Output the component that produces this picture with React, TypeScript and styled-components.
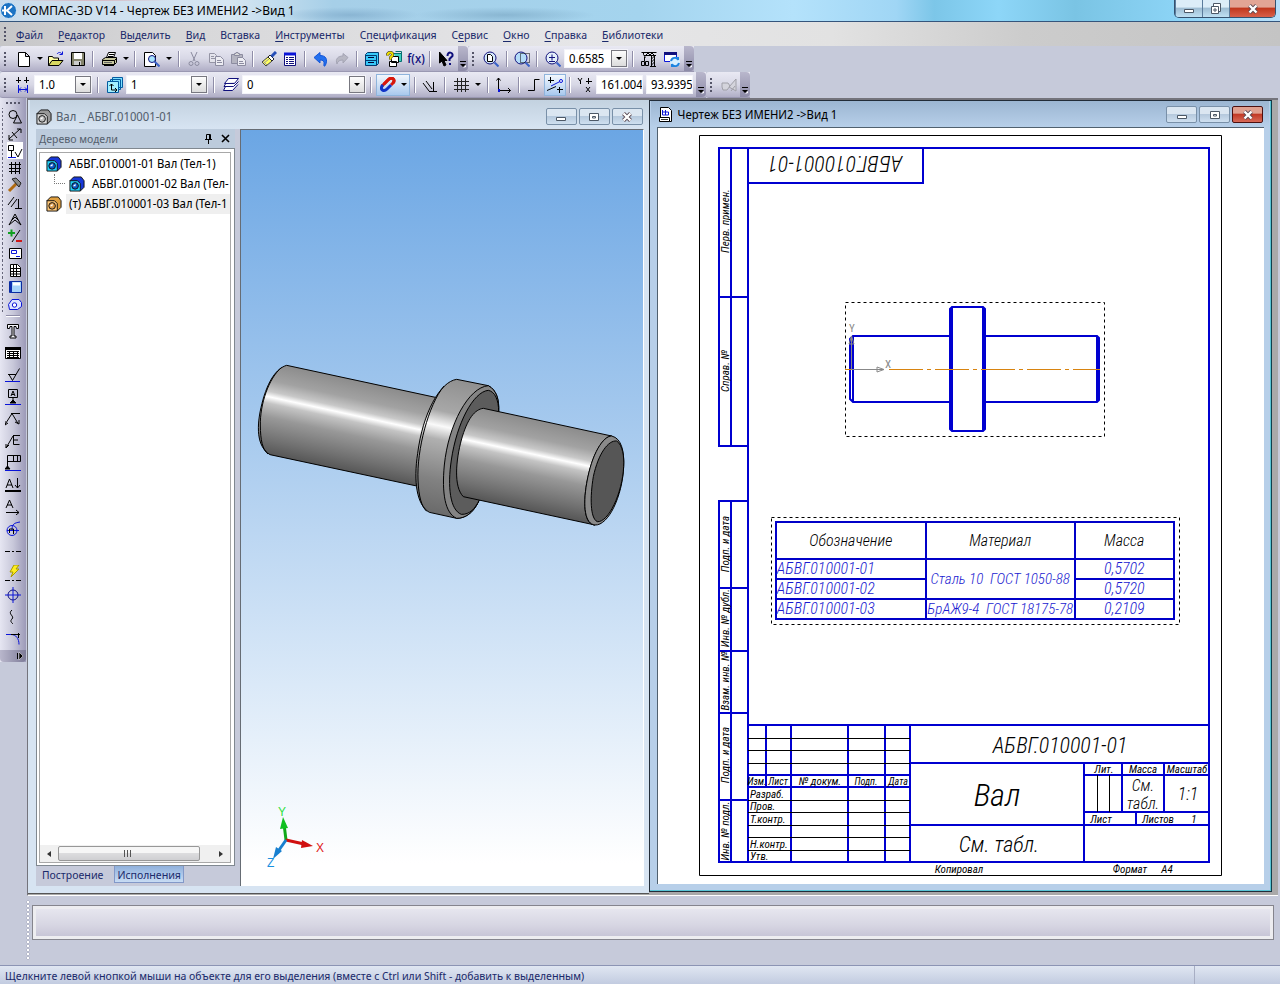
import React from "react";
import styled, { createGlobalStyle, css } from "styled-components";

const GlobalStyle = createGlobalStyle`
  * { box-sizing: border-box; }
  body {
    margin: 0;
    background: #c6cada;
    font-family: "Noto Sans Display", "Noto Sans", "DejaVu Sans Condensed", sans-serif;
    font-size: 11px;
    color: #1b2a6b;
  }
  button, input, select { font: inherit; color: inherit; margin: 0; }
`;

/* ---------- icons ---------- */

type PathProps = { d: string; c?: string; f?: string; w?: number };
const P = ({ d, c = "#000", f = "none", w = 1 }: PathProps) => (
  <path d={d} stroke={c} fill={f} strokeWidth={w} />
);

const blue = "#0a14d8";
const navy = "#10107c";

const icons: Record<string, React.ReactNode> = {
  new: <P d="M2.5 1.5h7l4 4v10h-11zM9.5 1.5v4h4" f="#fff" />,
  open: (
    <>
      <P d="M.5 14.5v-9h4l1 1.5h5v2.5" f="#ffffa8" />
      <P d="M.5 14.5l3.500-5h11l-4 5z" f="#d8d860" />
      <P d="M9 3c1.500-2 3.500-2 5 0M14.500.500v3h-3" c={blue} />
    </>
  ),
  save: (
    <>
      <P d="M1.5 1.5h13v13h-13z" f="#84846c" />
      <P d="M4 2h8v6h-8z" c="none" f="#fff" />
      <P d="M4 10h7v4h-7z" c="none" f="#ccc" />
      <P d="M9.500 11v3" />
    </>
  ),
  print: (
    <>
      <P d="M4.5 6.500l2-5h7l-2 5z" f="#fff" />
      <P d="M7 3.500h5M6 5.500h5" />
      <P d="M.5 8.500l3-2h11v5l-2 2h-12z" f="#c8c8a0" />
      <P d="M1 9.500h11.500l2-2M12.500 9.500v4M2 14.500h10" />
      <P d="M2 11.500h8" c="#666" />
    </>
  ),
  preview: (
    <>
      <P d="M.5 1.500h8l3 3v11h-11z" f="#fff" />
      <circle cx="8" cy="8" r="3.500" fill="#a8e4ff" stroke={navy} />
      <P d="M10.500 10.500l5 5" c="#3a62c8" w={2} />
    </>
  ),
  cut: (
    <>
      <P d="M5 1l4 9M11 1l-4 9" c="#8c8ca0" />
      <circle cx="5" cy="12.500" r="2" fill="none" stroke="#8c8ca0" />
      <circle cx="11" cy="12.500" r="2" fill="none" stroke="#8c8ca0" />
    </>
  ),
  copy: (
    <>
      <P d="M1.500 2.500h5l2 2v7h-7zM3 5.500h3M3 7.500h4" c="#9494a4" f="#e4e4ec" />
      <P d="M7.500 5.500h5l3 3v6h-8zM9 9.500h4M9 11.500h5" c="#8c8ca0" f="#ececf2" />
    </>
  ),
  paste: (
    <>
      <P d="M1.500 3.500h11v9h-11z" c="#8c8ca0" f="#b4b4c0" />
      <P d="M4.500 4.500v-2h1.500v-1h2v1h1.500v2z" c="#8c8ca0" f="#ddd" />
      <P d="M7.500 6.500h5l3 3v5h-8zM9 10.500h4M9 12.500h5" c="#8c8ca0" f="#ececf2" />
    </>
  ),
  brush: (
    <>
      <P d="M1 11l6-5 4 4-6 5z" c="#444" f="#ffff60" />
      <P d="M3 12l5-4M2 10l4 4" c="#999" />
      <P d="M7 6l2-2 4 4-2 2z" c="#222" f="#fff" />
      <P d="M10.500 5.500l4.500-4.500" c="#2850b8" w={3} />
    </>
  ),
  props: (
    <>
      <P d="M2.500 2.500h11v12h-11z" c={navy} f="#fff" />
      <P d="M2 3h12" c={blue} w={3} />
      <P d="M4 6.500h2M7 6.500h5M4 8.500h2M7 8.500h5M4 10.500h2M7 10.500h5M4 12.500h2M7 12.500h5" c={navy} />
    </>
  ),
  undo: <P d="M1 6.500l6-5v3c6 0 8 4 5.500 9.500-1 2-2 1.500-1.500-1 .500-3-1-4-4-4v3z" c="#1456d8" f="#2470ee" />,
  redo: <P d="M14 6.500l-5-4v2.500c-5 0-8 3-6 8 .500-3 3-4 6-4v3z" c="#a4a4b4" f="#b8b8c4" />,
  cabinet: (
    <>
      <P d="M1.500 3.500l2-2h11v11l-2 2h-11z" f="#38c8f8" c="#023a70" />
      <P d="M1.500 4.500h11v10M1.500 9.500h11" c="#023a70" />
      <P d="M4 6.500h6M4 11.500h6" c="#003" />
    </>
  ),
  vars: (
    <>
      <P d="M7.500 2.500h8v8h-3" c="#067070" f="#40d0c0" />
      <P d="M9.500.500h6v8" c="#067070" />
      <P d="M5.500 5.500h7v6h-7zM3.500 10.500h7v5h-7z" f="#fff" />
      <P d="M1.500 4.500c0-4 6-4 5 0l-2 2v2" c="#222" w={3} />
      <P d="M1.500 4.500c0-4 6-4 5 0l-2 2v2" c="#f0e000" w={2} />
    </>
  ),
  help: (
    <>
      <P d="M1.500 1v11l2.500-2 2 5 2-1-2-4.500h3z" f="#000" />
      <P d="M9.500 5c0-5 6-4 5 0l-3 3v2M11 13h2" c={navy} w={2} />
    </>
  ),
  zoomPage: (
    <>
      <circle cx="7" cy="7" r="6" fill="#d4e8fa" stroke={navy} />
      <P d="M4.500 3.500h3l2 2v5h-5z" f="#fff" />
      <P d="M11.500 11.500l4 4" c="#3a62c8" w={2} />
    </>
  ),
  zoomArea: (
    <>
      <circle cx="7" cy="7" r="6" fill="#b4dcf8" stroke={navy} />
      <path d="M6.500 2.500h9v9h-9z" fill="none" stroke="#000" strokeDasharray="1 1" />
      <P d="M11.500 11.500l4 4" c="#3a62c8" w={2} />
    </>
  ),
  zoomIn: (
    <>
      <circle cx="7" cy="7" r="6" fill="#e4f0fa" stroke={navy} />
      <P d="M4 6.500h6M7 3.500v6M4 10.500h6" c={navy} />
      <P d="M11.500 11.500l4 4" c="#3a62c8" w={2} />
    </>
  ),
  crane: (
    <>
      <P d="M.500 1.500h15M3 4.500h12M2.500 1.500v2l2 3M5 4l2-2 2 2 2-2 2 2M10.500 5v10M13.500 5v10M10.500 8l3-3M10.500 11l3-3M10.500 14l3-3M9 15.500h6" />
      <P d="M3.500 6v4M.500 10.500h3v4h-3zM4.500 10.500h3v4h-3z" />
    </>
  ),
  refresh: (
    <>
      <P d="M.500 1.500h12v9h-12z" c={blue} f="#fff" />
      <P d="M0 2.500h13" c={navy} w={3} />
      <circle cx="11" cy="11" r="5" fill="#d8f0ff" stroke="none" />
      <P d="M7 10c1-4 6-4 7-1v-3M15 12c-1 4-6 4-7 1v3" c="#1c84e0" w={2} />
    </>
  ),
  step: (
    <>
      <P d="M3.500 0v6M1 3.500h5M11.500 0v6M9 3.500h5" />
      <P d="M3.500 8v8M12.500 8v8M4 12.500h8M6 10.500l-2 2 2 2M10 10.500l2 2-2 2" c={blue} />
    </>
  ),
  views: (
    <>
      <P d="M5.500.500h10v10h-10zM3.500 2.500h10v10h-10z" c="#045ca0" f="#7ce0ff" />
      <P d="M.500 4.500h11v11h-11z" c="#045ca0" f="#a4f0ff" />
      <P d="M4.500 7v6h5M2.500 9l2-2 2 2M8 11l2 2-2 2" />
    </>
  ),
  layers: <P d="M5.500 1.500h10l-4 5h-10zM3 6l-2 3.500h9.500l5-5M2.500 9.500l-2 4h9l5.500-6" c={navy} f="#fff" />,
  magnet: (
    <>
      <P d="M2 9l6-6c4-4 8 0 5 3l-2 2" c="#d8180c" w={3} />
      <P d="M3 8l-1 1c-2 4 2 6 5 3l4-4" c="#1034c8" w={3} />
      <P d="M4 7l4-4c4-4 8 0 5 3" c="#d8180c" w={3} />
    </>
  ),
  perp: <P d="M1 6l6 8M4 4l6 8M11.500 5v9M7 14.500h8" />,
  grid: <P d="M4.500 1v14M8.500 1v14M12.500 1v14M1 4.500h15M1 8.500h15M1 12.500h15" c="#222" />,
  axes: (
    <>
      <P d="M3.500 1v12.500h12M1.500 3.500l2-2.500 2 2.500M13 11l2.500 2.500-2.500 2.500" />
      <P d="M3 13.500h2" c={blue} w={3} />
    </>
  ),
  ortho: <P d="M2 13.500h6.500v-11h5" />,
  snap: (
    <>
      <P d="M3.500 0v6M1 3.500h6M12.500 10v6M10 12.500h6M0 13.500l9-4" />
      <P d="M4 9l10-5" c={blue} />
      <circle cx="14" cy="4" r="1.500" fill="#fff" stroke={blue} />
    </>
  ),
  xy: <P d="M1 1l2 3 2-3M3.500 4v3M11.500 1v6M9 4.500h6M9 10l4 5M13 10l-4 5" />,
  cad: <P d="M1 6h6l2 3-3 4h-4l-1-3zM8 10l7-8v12zM10 14l4-5" c="#a0a0a8" f="#d4d4dc" />,
  shapes: (
    <>
      <circle cx="6" cy="5.500" r="4" fill="none" stroke="#000" />
      <P d="M10.500 6l4 8h-8z" />
    </>
  ),
  dims: <P d="M2 13l11-10M2 9v5h4M10 3h4v4M5 6l5 6" />,
  symb: (
    <>
      <P d="M1.500 2.500h5v5h-5zM4.500 8v6M8 9l3 5 4-8" />
      <P d="M1 14.500h8" c={blue} />
    </>
  ),
  hatch: <P d="M4.500 2v12M8.500 2v12M12.500 2v12M2 4.500h12M2 8.500h12M2 11.500h10" />,
  hammer: (
    <>
      <P d="M2 14l8-8" c="#b06a10" w={3} />
      <P d="M5 2l4-1 5 5-2 4z" c="#222" f="#888" />
    </>
  ),
  par: <P d="M1 11l6-8M4 13l6-8M11.500 5v9M8 14.500h7" />,
  compass: <P d="M2 14l6-11 6 11M5 9l3-3 3 3M2 14l6-5 6 5" />,
  plusminus: (
    <>
      <P d="M1 5h7M4.500 1.500v7" c="#10a020" w={2} />
      <P d="M5 14l8-12" />
      <P d="M9 13h6" c="#d01818" w={2} />
    </>
  ),
  spec: (
    <>
      <P d="M2.500 3.500h12v10h-12z" f="#fff" />
      <P d="M4.500 5.500h5v3h-5zM9 11.500h4" c={blue} />
    </>
  ),
  sheet: (
    <>
      <P d="M3.500 2.500h7l3 3v9h-10z" f="#fff" />
      <P d="M6.500 3v11M9.500 3v11M4 6.500h9M4 9.500h9M4 12h9" />
    </>
  ),
  book: (
    <>
      <P d="M2.500 2.500h12v11h-12z" c="#0a2ca0" f="#a8d4fa" />
      <P d="M4 2v12" c="#1030b0" w={2} />
      <P d="M6 5h7" c="#fff" w={3} />
    </>
  ),
  part: (
    <>
      <P d="M5 3.500h7l2.500 3v4l-4 3h-8l-1-5z" c={blue} f="#dce4ff" />
      <circle cx="7.500" cy="9" r="2.200" fill="#fff" stroke={blue} />
    </>
  ),
  text: <P d="M2.500 1.500h11v4h-2l-.500-2h-2v9.500h2v2h-6v-2h2v-9.500h-2l-.500 2h-2z" f="#f2f2f8" />,
  table: (
    <>
      <P d="M.5 2.500h15v11h-15z" f="#fff" />
      <P d="M0 3.500h16" w={3} />
      <P d="M2 6.500h12M2 8.500h12M2 10.500h12M2 12.500h12M4.500 6v7M8.500 6v7M12.500 6v7" />
    </>
  ),
  rough: (
    <>
      <P d="M3 7.500h8M4 7.500l3.500 6 7-12" />
      <P d="M0 14.500h15" c={blue} />
    </>
  ),
  base: (
    <>
      <P d="M3.500.500h9v8h-9zM6 7l2-5 2 5M7 5.500h2M8 9v4" />
      <P d="M5 14l3-3 3 3z" f="#000" />
      <P d="M0 15.500h16" c={blue} />
    </>
  ),
  leader: <P d="M6 2.500h9M7 2.500l-7 11M7 2.500l6 10M0 10v4l3-2M10 11l4 2v-4" />,
  leaderE: <P d="M8 2.500h7M8.500 2.500v9h6M8 7h5M8 3l-7 12M1 11v4l3-3" />,
  flag: (
    <>
      <P d="M2.500 14v-13.500h13v6h-13M8.500.500v6M12.500.500v6" />
      <P d="M0 14l2.500-3 2.500 3z" f="#000" />
      <P d="M0 15.500h16" c={blue} />
    </>
  ),
  adown: (
    <>
      <P d="M1 11l3.500-9 3.500 9M2 8h5M12.500 1v10M10 8l2.500 3 2.500-3" />
      <P d="M0 14h16" w={2} />
    </>
  ),
  aright: <P d="M1 9l3.500-8 3.500 8M2 6h5M1 13.500h13M11 11l3 2.500-3 2.500" />,
  view: (
    <>
      <circle cx="7" cy="9.500" r="5" fill="none" stroke={blue} />
      <P d="M2 9.500h12M7 9c0-6 2-7 8-8" c={blue} />
      <P d="M4.500 12v-4h4v5" />
    </>
  ),
  dashes: <P d="M0 8.500h5M7 8.500h2M11 8.500h5" />,
  bolt: (
    <>
      <P d="M9 0h5l-3 4h3l-8 8 2-5h-3z" c="#a89a00" f="#ffee20" />
      <P d="M0 15.500h5M7 15.500h2M11 15.500h5" />
    </>
  ),
  target: (
    <>
      <circle cx="8" cy="8" r="5" fill="none" stroke={navy} />
      <P d="M8 0v16M0 8h16" c={blue} />
    </>
  ),
  wave: <P d="M7 1c-5 4 3 6 0 9-2 2-1 3 1 5" />,
  corner: (
    <>
      <P d="M1 3.500h5c5 0 8 4 8 10" c={blue} />
      <P d="M6 3.500h9M13.500 2v5" />
    </>
  ),
};

const Svg = styled.svg`
  display: block;
  flex: none;
`;
const Icon = ({ name }: { name: string }) => (
  <Svg width="16" height="16" viewBox="0 0 16 16" aria-hidden="true">
    {icons[name]}
  </Svg>
);

const Hexnut = ({ face, side, hole }: { face: string; side: string; hole: string }) => (
  <Svg width="16" height="16" viewBox="0 0 17 17" aria-hidden="true">
    <path d="M1 5l4-4h8l3 4v7l-4 4z" fill={side} stroke="#111" />
    <path d="M1 5h8l3 3v8h-11z" fill={face} stroke="#111" />
    <circle cx="6.500" cy="10.500" r="3.500" fill={hole} stroke="#111" />
    <path d="M4 11l3-3v3z" fill="#fff" />
  </Svg>
);

/* ---------- application shell ---------- */

const Page = styled.div`
  min-height: 100vh;
  display: flex;
  flex-direction: column;
`;

const TitleBar = styled.header`
  height: 22px;
  display: flex;
  align-items: center;
  gap: 5px;
  border-bottom: 1px solid #35557c;
  background:
    radial-gradient(ellipse at 7% 0, #d9a9b0 0, transparent 5%),
    radial-gradient(70px 8px at 350px 15px, rgba(110, 155, 190, 0.5) 0, transparent 100%),
    radial-gradient(90px 8px at 505px 15px, rgba(110, 155, 185, 0.5) 0, transparent 100%),
    linear-gradient(90deg, #c9dcec 0, #d6e6f2 18%, #a6cfe8 26%, #a4d4ee 50%, #b4e2fb 62%, #a0d6f5 70%, #7cc6e8 73%, #8dd6f8 78%, #7ac4e4 84%, #8cd4f6 92%, #b8e0fa 100%);
  color: #000;
  flex: none;
`;

const AppTitle = styled.h1`
  margin: 0;
  flex: 1;
  font-family: "Noto Sans", sans-serif;
  font-size: 12px;
  font-weight: 400;
`;

const SystemButtons = styled.div`
  display: flex;
  align-self: flex-start;
  height: 18px;
  margin-right: 4px;
  border: 1px solid #35516e;
  border-top: 0;
  border-radius: 0 0 5px 5px;
  overflow: hidden;
`;

const SystemButton = styled.button<{ $close?: boolean }>`
  width: ${(p) => (p.$close ? 46 : 27)}px;
  padding: 0;
  display: flex;
  align-items: center;
  justify-content: center;
  border: 0;
  border-left: 1px solid #5b7c9c;
  background: ${(p) =>
    p.$close
      ? "linear-gradient(#e2a595 0 40%, #c1391f 50%, #d8604a)"
      : "linear-gradient(#dcedf8 0 40%, #9fbed4 50%, #bfe0f2)"};
`;

const MenuBar = styled.nav`
  height: 24px;
  display: flex;
  align-items: center;
  gap: 15px;
  flex: none;
  background: linear-gradient(90deg, #c6c6c8 0, #d6d6d8 12%, #e6e6e8 45%, #e2e2e2 65%, #cccccc 80%, #c4c4c4 100%);
`;

const MenuLink = styled.a`
  color: #1b2a6b;
  text-decoration: none;
  u { text-underline-offset: 2px; }
`;

const ToolRow = styled.div`
  display: flex;
  height: 26px;
  flex: none;
`;

const ToolBar = styled.div`
  display: flex;
  align-items: center;
  height: 26px;
  flex: none;
  background: linear-gradient(#e9e9f3, #d8d8e6 50%, #b0aec6);
  border-bottom: 1px solid #9a98b2;
  border-radius: 3px 0 0 3px;
`;

const Grip = styled.span`
  width: 12px;
  height: 16px;
  flex: none;
  background: radial-gradient(circle, #555568 1px, transparent 1px) 3px 0 / 4px 4px repeat-y;
`;

const MenuGrip = styled(Grip)`
  width: 16px;
  margin-right: -15px;
`;

const ToolButton = styled.button<{ $w?: number; $on?: boolean }>`
  width: ${(p) => p.$w ?? 20}px;
  height: 22px;
  padding: 0;
  display: flex;
  align-items: center;
  justify-content: center;
  flex: none;
  gap: 5px;
  border: 1px solid transparent;
  background: none;
  color: ${navy};
  ${(p) => p.$on && css`
    border-color: #8fb4dc;
    background: linear-gradient(#f2f7fd, #a9c9ee);
  `}
`;

const Formula = styled.span`
  font-size: 12px;
  font-weight: 500;
  line-height: 16px;
`;

const Arrow = styled.span`
  width: 0;
  height: 0;
  border: 3px solid transparent;
  border-top: 3px solid #000;
  border-bottom: 0;
`;

const Divider = styled.span<{ $w?: number }>`
  width: ${(p) => p.$w ?? 10}px;
  height: 16px;
  flex: none;
  background: linear-gradient(90deg, #8f8da8 0 1px, #fff 1px 2px) center / 2px 100% no-repeat;
`;

const BarEnd = styled.button`
  width: 10px;
  height: 25px;
  margin-left: auto;
  padding: 0 0 2px;
  display: flex;
  align-items: flex-end;
  justify-content: center;
  border: 0;
  border-radius: 0 4px 4px 0;
  background: linear-gradient(#b9b7cc, #8d8ba8);
  flex: none;
`;

const Overflow = () => (
  <Svg width="8" height="9" viewBox="0 0 8 9" aria-hidden="true">
    <path d="M1 1.500h6" stroke="#000" />
    <path d="M1 4h6l-3 3z" fill="#000" />
    <path d="M4 8l3-3v2z" fill="#fff" />
  </Svg>
);

const Combo = styled.label<{ $w: number }>`
  width: ${(p) => p.$w}px;
  height: 19px;
  display: flex;
  flex: none;
  background: #fff;
  color: #000;
  border: 1px solid #f4f4fa;
`;

const ComboSelect = styled.select`
  flex: 1;
  min-width: 0;
  appearance: none;
  border: 0;
  padding: 0 0 0 4px;
  background: #fff;
  font-size: 12px;
  line-height: 16px;
`;

const ComboArrow = styled.span`
  width: 16px;
  display: flex;
  align-items: center;
  justify-content: center;
  border: 1px solid #77777f;
  background: linear-gradient(#fdfdfd, #dcdcdc);
`;

const CoordInput = styled.input`
  width: 47px;
  height: 19px;
  margin-right: 3px;
  padding: 0 0 0 4px;
  border: 1px solid #f4f4fa;
  background: #fff;
  color: #000;
  font-size: 12px;
`;

const Select = ({ label, value, w }: { label: string; value: string; w: number }) => (
  <Combo $w={w}>
    <ComboSelect aria-label={label} defaultValue={value}>
      <option>{value}</option>
    </ComboSelect>
    <ComboArrow>
      <Arrow />
    </ComboArrow>
  </Combo>
);

const Btn = ({ icon, label, w, on }: { icon: string; label: string; w?: number; on?: boolean }) => (
  <ToolButton type="button" aria-label={label} $w={w} $on={on}>
    <Icon name={icon} />
  </ToolButton>
);

const Drop = ({ label, w = 8 }: { label: string; w?: number }) => (
  <ToolButton type="button" aria-label={label} $w={w}>
    <Arrow />
  </ToolButton>
);

const menu: [string, string, string][] = [
  ["", "Ф", "айл"],
  ["", "Р", "едактор"],
  ["В", "ы", "делить"],
  ["", "В", "ид"],
  ["Вст", "а", "вка"],
  ["", "И", "нструменты"],
  ["С", "п", "ецификация"],
  ["С", "е", "рвис"],
  ["", "О", "кно"],
  ["", "С", "правка"],
  ["", "Б", "иблиотеки"],
];

/* ---------- workspace ---------- */

const Workspace = styled.div`
  display: flex;
  flex: 1;
  min-height: 0;
`;

const SideColumn = styled.aside`
  width: 27px;
  flex: none;
`;

const SideBar = styled.div`
  width: 26px;
  display: flex;
  flex-direction: column;
  align-items: center;
  background: linear-gradient(90deg, #e6e6f2, #c8c8da 50%, #9c9ab8);
`;

const SideGrip = styled.span`
  width: 16px;
  height: 10px;
  background: radial-gradient(circle, #555568 1px, transparent 1px) 0 3px / 4px 4px repeat-x;
`;

const PanelButton = styled.button<{ $on?: boolean }>`
  width: 26px;
  height: 17px;
  padding: 0 0 0 7px;
  display: flex;
  align-items: center;
  border: 0;
  background:
    radial-gradient(circle, #66667a 1px, transparent 1px) 1px 2px / 3px 4px repeat-y
    ${(p) => p.$on && ", linear-gradient(#fff, #fff) 7px 0 / 16px 17px no-repeat"};
`;

const SideButton = styled.button`
  width: 26px;
  height: 22px;
  padding: 0 0 0 5px;
  display: flex;
  align-items: center;
  border: 0;
  background: none;
`;

const SideRule = styled.span`
  width: 14px;
  height: 8px;
  background: linear-gradient(#8f8da8 0 1px, #fff 1px 2px) center / 100% 2px no-repeat;
`;

const SideEnd = styled.button`
  width: 26px;
  height: 12px;
  padding: 0 2px;
  display: flex;
  align-items: center;
  justify-content: flex-end;
  border: 0;
  border-radius: 0 0 4px 4px;
  background: linear-gradient(90deg, #b9b7cc, #7d7b98);
`;

const Mdi = styled.main`
  flex: 1;
  display: flex;
  align-items: stretch;
  min-width: 0;
  padding: 0 6px 1px 0;
  margin-right: 2px;
  background: #a9a9a9;
  border-top: 2px solid #74747c;
  border-left: 1px solid #74747c;
  border-bottom: 1px solid #fff;
`;

const ModelWindow = styled.section`
  flex: 1 1 0;
  min-width: 0;
  display: flex;
  flex-direction: column;
  padding: 0 5px 7px 8px;
  background: #d7e4f2;
  border-bottom: 1px solid #555;
`;

const DrawingWindow = styled.section`
  flex: 1 1 0;
  min-width: 0;
  display: flex;
  flex-direction: column;
  padding: 0 7px 7px 7px;
  background: #b7cfe9;
  border: 1px solid #222c38;
  border-right-color: #10404c;
  box-shadow: inset -1px -1px 0 #58c4d4;
  margin-bottom: 2px;
`;

const WindowHead = styled.div<{ $active?: boolean }>`
  height: ${(p) => (p.$active ? 26 : 29)}px;
  flex: none;
  display: flex;
  align-items: center;
  gap: 4px;
  padding: 4px 6px 0;
  margin: 0 -5px 0 -6px;
  padding-top: ${(p) => (p.$active ? 1 : 4)}px;
  color: ${(p) => (p.$active ? "#000" : "#54606e")};
  background: ${(p) =>
    p.$active ? "linear-gradient(#9cb6d2, #b7cfe9)" : "linear-gradient(#c3d2e0, #d7e4f2)"};
`;

const WindowTitle = styled.h2`
  flex: 1;
  margin: 0;
  font-size: 12px;
  font-weight: 400;
`;

const ChildButton = styled.button<{ $close?: boolean }>`
  width: 31px;
  height: 17px;
  padding: 0;
  display: flex;
  align-items: center;
  justify-content: center;
  border: 1px solid #7990a8;
  border-radius: 2px;
  background: linear-gradient(#dbe6f1 0 45%, #b6c9dd 50%, #cfe0f0);
  ${(p) => p.$close && css`
    border-color: #4c1010;
    background: linear-gradient(#e0a090 0 40%, #c23a26 50%, #d86a58);
  `}
`;

const ChildButtons = styled.div`
  display: flex;
  gap: 2px;
`;

const Glyph = ({ kind }: { kind: "min" | "max" | "restore" | "close" }) => (
  <Svg width="14" height="12" viewBox="0 0 14 12" aria-hidden="true">
    {kind === "min" && <path d="M2.500 6.500h9v3h-9z" fill="#fff" stroke="#4c5866" />}
    {kind === "max" && <path d="M2.500 2.500h9v7h-9zM5.500 5.500h3v1.500h-3z" fill="#fff" stroke="#4c5866" />}
    {kind === "restore" && (
      <>
        <path d="M4.500.500h7v8h-7z" fill="#fff" stroke="#4c5866" />
        <path d="M2.500 3.500h7v7h-7zM5 6h2v2h-2z" fill="#fff" stroke="#4c5866" />
      </>
    )}
    {kind === "close" && (
      <>
        <path d="M3.500 2.500l7 7M10.500 2.500l-7 7" stroke="#5a4a54" strokeWidth="4" />
        <path d="M3.500 2.500l7 7M10.500 2.500l-7 7" stroke="#fff" strokeWidth="2.400" />
      </>
    )}
  </Svg>
);

const ModelBody = styled.div`
  flex: 1;
  display: flex;
  min-height: 0;
`;

const TreePanel = styled.div`
  width: 204px;
  flex: none;
  display: flex;
  flex-direction: column;
  background: #c6cada;
  padding-right: 5px;
`;

const TreeHead = styled.div`
  height: 19px;
  display: flex;
  align-items: center;
  gap: 8px;
  padding: 0 5px 0 3px;
  background: #bccbdc;
  color: #55606e;
`;

const TreeTitle = styled.h3`
  flex: 1;
  margin: 0;
  font-size: 11px;
  font-weight: 400;
`;

const PlainButton = styled.button`
  padding: 0;
  border: 0;
  background: none;
`;

const TreeFrame = styled.div`
  flex: 1;
  display: flex;
  padding: 3px 3px 2px 2px;
  background: #fff;
  border: 1px solid #808890;
`;

const TreeBox = styled.div`
  flex: 1;
  min-width: 0;
  display: flex;
  flex-direction: column;
  border: 1px solid #a8a8a8;
`;

const TreeList = styled.ul`
  flex: 1;
  margin: 0;
  padding: 1px 0;
  list-style: none;
  overflow: hidden;
  color: #000;
  font-size: 12px;
`;

const TreeItem = styled.li<{ $nested?: boolean }>`
  height: 20px;
  display: flex;
  align-items: center;
  gap: 4px;
  padding-left: ${(p) => (p.$nested ? 14 : 6)}px;
  white-space: nowrap;
`;

const Branch = styled.span`
  width: 11px;
  height: 10px;
  margin: -10px 0 0;
  border-left: 1px dotted #777;
  border-bottom: 1px dotted #777;
`;

const TreeLabel = styled.span<{ $sel?: boolean }>`
  flex: 1;
  line-height: 20px;
  padding-left: 3px;
  overflow: hidden;
  background: ${(p) => (p.$sel ? "#efefef" : "none")};
`;

const ScrollBar = styled.div`
  height: 17px;
  display: flex;
  align-items: center;
  background: #f0f0f0;
`;

const ScrollArrow = styled.button<{ $dir: "left" | "right" }>`
  width: 18px;
  height: 17px;
  padding: 0;
  display: flex;
  align-items: center;
  justify-content: center;
  border: 0;
  background: none;
  &::before {
    content: "";
    border: 3px solid transparent;
    ${(p) => (p.$dir === "left" ? "border-right: 4px solid #333; border-left: 0;" : "border-left: 4px solid #333; border-right: 0;")}
  }
`;

const ScrollTrack = styled.div`
  flex: 1;
  display: flex;
`;

const ScrollThumb = styled.div`
  flex: 0 0 92%;
  height: 15px;
  border: 1px solid #979797;
  border-radius: 2px;
  background:
    repeating-linear-gradient(90deg, #555 0 1px, transparent 1px 3px) center / 9px 7px no-repeat,
    linear-gradient(#f6f6f6 0 45%, #dcdcde 50%, #cfcfd2);
`;

const Tabs = styled.div`
  height: 20px;
  display: flex;
  align-items: flex-start;
  gap: 8px;
  padding-left: 3px;
`;

const Tab = styled.button<{ $on?: boolean }>`
  height: 17px;
  padding: 2px 2px 0;
  line-height: 14px;
  border: ${(p) => (p.$on ? "1px solid #8298c8" : "1px solid transparent")};
  border-top: 0;
  background: ${(p) => (p.$on ? "linear-gradient(#8fb0dc, #c8dcf4)" : "none")};
`;

const Viewport = styled.div`
  flex: 1;
  min-width: 0;
  position: relative;
  overflow: hidden;
  border-left: 1px solid #666c74;
  border-top: 1px solid #666c74;
  border-right: 1px solid #fff;
  background: linear-gradient(#6ba6e4, #a7caee 40%, #fff 97%);
`;

const ShaftCanvas = styled.svg`
  position: absolute;
  left: -1px;
  top: 220px;
`;

const Triad = styled.svg`
  position: absolute;
  left: 24px;
  bottom: 18px;
  font-family: "Liberation Sans", sans-serif;
  font-size: 12px;
`;

const DrawingBody = styled.div`
  flex: 1;
  display: flex;
  justify-content: center;
  align-items: flex-start;
  padding-top: 7px;
  background: #fff;
  border: 1px solid #50606e;
  border-width: 1px 0 0 1px;
  overflow: hidden;
`;

const Sheet = styled.div`
  position: relative;
  width: 524px;
  height: 742px;
  flex: none;
  font-family: "Roboto Condensed", Roboto, "Liberation Sans", sans-serif;
  font-style: italic;
  font-weight: 300;
  color: #000;
`;

const VariantTable = styled.table`
  position: absolute;
  left: 76px;
  top: 386px;
  width: 400px;
  border-collapse: collapse;
  table-layout: fixed;
  border: 2px solid #0000c8;
  font-size: 16px;
  line-height: 18px;
  color: #1a1ad0;
  th, td {
    height: 20px;
    padding: 0;
    border: 2px solid #0000c8;
    font-weight: 300;
    text-align: center;
    white-space: nowrap;
  }
  th { height: 37px; color: #000; }
  tr td:first-child { text-align: left; }
`;

const MaterialCell = styled.td`
  font-size: 15px;
`;

const ink = "#0000d0";

type LabelProps = { x: number; y: number; size?: number; anchor?: "start" | "middle"; turn?: number; children: React.ReactNode };
const Label = ({ x, y, size = 11, anchor = "middle", turn, children }: LabelProps) => (
  <text
    x={x}
    y={y}
    fontSize={size}
    fontWeight={size < 16 ? 400 : 300}
    textAnchor={anchor}
    transform={turn ? `rotate(${turn} ${x} ${y})` : undefined}
  >
    {children}
  </text>
);

const DrawingSheet = () => (
  <Sheet>
    <Svg width="524" height="742" viewBox="0 0 524 742" role="img" aria-label="Чертеж вала">
      <path d="M.500.500h522v740h-522z" fill="none" stroke="#000" />
      <g fill="none" stroke={ink} strokeWidth="2">
        <path d="M49 13h461v714h-461zM49 48h175v-35" />
        <path d="M49 13h-29v298h29M32 13v298M20 162h29" />
        <path d="M49 366h-29v361h29M32 366v361M20 453h29M20 516h29M20 578h29M20 665h29" />
        <path d="M49 590h461M211 590v137M92 590v137M149 590v137M186 590v137M67 590v62M49 640h162M49 652h162" />
        <path d="M211 628h299M211 690h299M385 628v99M385 640h125M385 677h125M423 628v49M465 628v49M437 677v13" />
      </g>
      <path
        d="M49 603.500h162M49 615.500h162M49 628.500h162M49 665.500h162M49 677.500h162M49 690.500h162M49 702.500h162M49 715.500h162M398.500 640v37M410.500 640v37"
        stroke="#000"
      />
      <g fill="none" stroke="#000" strokeDasharray="3 3">
        <path d="M146.500 167.500h259v134h-259z" />
        <path d="M72.500 382.500h408v107h-408z" />
      </g>
      <g fill="none" stroke={ink} strokeWidth="2">
        <path d="M251 201h-97l-3 3v60l3 3h97M154 201v66" />
        <path d="M253 172h31l2 2v120l-2 2h-31l-2-2v-120zM253 173v122M284 173v122" />
        <path d="M286 201h112l2 2v62l-2 2h-112M398 201v66" />
      </g>
      <path d="M146 234.500h6M190 234.500h211" stroke="#d88410" strokeDasharray="34 4 4 4" fill="none" />
      <g stroke="#888" fill="none">
        <path d="M152.500 234v-33M150 209l2.500-8 2.500 8zM152 234.500h32M178 232l7 2.500-7 2.500z" />
      </g>
      <g fill="#888" fontStyle="normal">
        <Label x={153} y={197}>Y</Label>
        <Label x={189} y={233}>X</Label>
      </g>
      <Label x={136} y={21} size={22} turn={180}>АБВГ.010001-01</Label>
      <Label x={30} y={86} turn={-90}>Перв. примен.</Label>
      <Label x={30} y={236} turn={-90}>Справ. №</Label>
      <Label x={30} y={409} turn={-90}>Подп. и дата</Label>
      <Label x={30} y={483} turn={-90}>Инв. № дубл.</Label>
      <Label x={30} y={546} turn={-90}>Взам. инв. №</Label>
      <Label x={30} y={620} turn={-90}>Подп. и дата</Label>
      <Label x={30} y={696} turn={-90}>Инв. № подл.</Label>
      <Label x={58} y={650} size={10}>Изм.</Label>
      <Label x={79} y={650} size={10}>Лист</Label>
      <Label x={121} y={650}>№ докум.</Label>
      <Label x={167} y={650} size={10}>Подп.</Label>
      <Label x={199} y={650} size={10}>Дата</Label>
      <Label x={51} y={663} anchor="start">Разраб.</Label>
      <Label x={51} y={675} anchor="start">Пров.</Label>
      <Label x={51} y={688} anchor="start">Т.контр.</Label>
      <Label x={51} y={713} anchor="start">Н.контр.</Label>
      <Label x={51} y={725} anchor="start">Утв.</Label>
      <Label x={361} y={618} size={22}>АБВГ.010001-01</Label>
      <Label x={298} y={671} size={32}>Вал</Label>
      <Label x={300} y={717} size={22}>См. табл.</Label>
      <Label x={405} y={638}>Лит.</Label>
      <Label x={444} y={638}>Масса</Label>
      <Label x={488} y={638}>Масштаб</Label>
      <Label x={444} y={656} size={16}>См.</Label>
      <Label x={444} y={674} size={16}>табл.</Label>
      <Label x={489} y={665} size={18}>1:1</Label>
      <Label x={402} y={688}>Лист</Label>
      <Label x={459} y={688}>Листов</Label>
      <Label x={495} y={688}>1</Label>
      <Label x={260} y={738}>Копировал</Label>
      <Label x={431} y={738}>Формат</Label>
      <Label x={468} y={738}>А4</Label>
    </Svg>
    <VariantTable>
      <colgroup>
        <col width="150" />
        <col width="149" />
        <col width="99" />
      </colgroup>
      <thead>
        <tr>
          <th scope="col">Обозначение</th>
          <th scope="col">Материал</th>
          <th scope="col">Масса</th>
        </tr>
      </thead>
      <tbody>
        <tr>
          <td>АБВГ.010001-01</td>
          <MaterialCell rowSpan={2}>Сталь 10 &nbsp;ГОСТ 1050-88</MaterialCell>
          <td>0,5702</td>
        </tr>
        <tr>
          <td>АБВГ.010001-02</td>
          <td>0,5720</td>
        </tr>
        <tr>
          <td>АБВГ.010001-03</td>
          <MaterialCell>БрАЖ9-4 &nbsp;ГОСТ 18175-78</MaterialCell>
          <td>0,2109</td>
        </tr>
      </tbody>
    </VariantTable>
  </Sheet>
);

const metal = (
  <>
    <stop offset="0" stopColor="#8c8c8c" />
    <stop offset="0.200" stopColor="#a2a2a2" />
    <stop offset="0.320" stopColor="#c8c8c8" />
    <stop offset="0.380" stopColor="#fff" />
    <stop offset="0.450" stopColor="#c4c4c4" />
    <stop offset="0.600" stopColor="#989898" />
    <stop offset="0.850" stopColor="#707070" />
    <stop offset="1" stopColor="#565656" />
  </>
);

const Shaft = () => (
  <ShaftCanvas width="400" height="190" viewBox="0 0 1200 570" role="img" aria-label="Модель вала">
    <defs>
      <linearGradient id="rear" gradientUnits="userSpaceOnUse" x1="140" y1="46" x2="82" y2="312">{metal}</linearGradient>
      <linearGradient id="front" gradientUnits="userSpaceOnUse" x1="730" y1="175" x2="673" y2="440">{metal}</linearGradient>
      <linearGradient id="collar" gradientUnits="userSpaceOnUse" x1="650" y1="88" x2="565" y2="487">
        <stop offset="0" stopColor="#909090" />
        <stop offset="0.250" stopColor="#a8a8a8" />
        <stop offset="0.360" stopColor="#fafafa" />
        <stop offset="0.460" stopColor="#b0b0b0" />
        <stop offset="0.750" stopColor="#828282" />
        <stop offset="1" stopColor="#6a6a6a" />
      </linearGradient>
    </defs>
    <g stroke="#000" strokeWidth="3" strokeLinejoin="round">
      <path d="M140 46L600 145L530 408L90 314C50 290 48 230 66 160C84 90 110 55 140 46Z" fill="url(#rear)" />
      <path d="M125 52C85 85 60 165 61 225C61 270 68 300 84 312" fill="none" />
      <path d="M650 88L745 107C770 120 778 150 776 185L717 452C700 490 675 505 650 505L568 487C530 465 520 395 533 310C548 190 600 95 650 88Z" fill="url(#collar)" />
      <path d="M612 108C565 165 530 300 534 390C536 440 545 470 560 484" fill="none" />
      <path d="M745 107C770 120 778 150 776 185L717 452C700 490 675 505 650 505C615 490 605 430 613 345C625 225 685 112 745 107Z" fill="#848484" />
      <path d="M745 121C765 125 776 150 776 185L717 452C705 475 690 494 664 493C630 480 622 410 634 330C650 220 700 125 745 121Z" fill="#5c5c5c" />
      <path d="M730 175L1115 258C1100 256 1060 290 1040 400C1028 470 1035 525 1065 525L670 440C640 410 648 330 664 270C682 205 705 178 730 175Z" fill="url(#front)" />
      <path d="M1115 258C1145 265 1153 305 1151 350C1147 440 1105 527 1065 525C1035 522 1028 470 1040 400C1055 310 1090 258 1115 258Z" fill="#8a8a8a" />
      <path d="M1130 273C1148 285 1153 320 1151 350C1147 430 1105 518 1072 515C1050 505 1050 440 1060 380C1075 310 1105 270 1130 273Z" fill="#565656" />
    </g>
  </ShaftCanvas>
);

/* ---------- footer ---------- */

const PropertyArea = styled.section`
  height: 69px;
  flex: none;
  display: flex;
  align-items: flex-start;
  padding: 4px 6px 0 26px;
  gap: 2px;
`;

const PropertyGrip = styled.span`
  width: 4px;
  height: 60px;
  background: radial-gradient(circle, #fff 1px, #a4a6b8 1px, transparent 2px) 0 0 / 4px 4px repeat-y;
`;

const PropertyBar = styled.div`
  flex: 1;
  height: 35px;
  margin-top: 5px;
  border: 1px solid #85858d;
  box-shadow: inset 0 0 0 3px #ededf0;
  background: linear-gradient(#e9e9f1, #d6d5e2 60%, #c3c1d3);
`;

const StatusBar = styled.footer`
  height: 19px;
  flex: none;
  display: flex;
  border-top: 1px solid #8c94b4;
  background: linear-gradient(#e0e6f2, #c2cbe0);
  line-height: 19px;
`;

const StatusText = styled.span`
  flex: 1;
  padding-left: 5px;
`;

const StatusCell = styled.span`
  width: 86px;
  border-left: 1px solid #a8aec4;
`;

const panelIcons: [string, string][] = [
  ["shapes", "Геометрия"], ["dims", "Размеры"], ["symb", "Обозначения"], ["hatch", "Обозначения для строительства"],
  ["hammer", "Редактирование"], ["par", "Параметризация"], ["compass", "Измерения"], ["plusminus", "Выделение"],
  ["spec", "Виды"], ["sheet", "Спецификация"], ["book", "Отчеты"], ["part", "Вставки"],
];
const commandIcons: [string, string][] = [
  ["text", "Ввод текста"], ["table", "Ввод таблицы"], ["rough", "Шероховатость"], ["base", "База"],
  ["leader", "Линия-выноска"], ["leaderE", "Обозначение позиций"], ["flag", "Допуск формы"], ["adown", "Линия разреза"],
  ["aright", "Стрелка взгляда"], ["view", "Выносной элемент"], ["dashes", "Осевая линия"], ["bolt", "Автоосевая"],
  ["target", "Обозначение центра"], ["wave", "Волнистая линия"], ["corner", "Выбор"],
];

export default function App() {
  return (
    <Page>
      <GlobalStyle />
      <TitleBar>
        <Svg width="17" height="17" viewBox="0 0 17 17" aria-hidden="true">
          <circle cx="8.500" cy="8.500" r="8" fill="#1d74c4" stroke="#cfe6f6" />
          <path d="M5 4v9M12 4l-5 4.500 5 4.500M2 8.500h5" stroke="#fff" strokeWidth="2" fill="none" />
        </Svg>
        <AppTitle>КОМПАС-3D V14 - Чертеж БЕЗ ИМЕНИ2 -&gt;Вид 1</AppTitle>
        <SystemButtons>
          <SystemButton type="button" aria-label="Свернуть"><Glyph kind="min" /></SystemButton>
          <SystemButton type="button" aria-label="Восстановить"><Glyph kind="restore" /></SystemButton>
          <SystemButton type="button" aria-label="Закрыть" $close><Glyph kind="close" /></SystemButton>
        </SystemButtons>
      </TitleBar>

      <MenuBar>
        <MenuGrip />
        {menu.map(([before, key, after]) => (
          <MenuLink href="#" key={before + key + after}>
            {before}<u>{key}</u>{after}
          </MenuLink>
        ))}
      </MenuBar>

      <ToolRow>
        <ToolBar>
          <Grip />
          <Btn icon="new" label="Создать" w={24} />
          <Drop label="Варианты создания" />
          <Btn icon="open" label="Открыть" w={24} />
          <Btn icon="save" label="Сохранить" />
          <Divider />
          <Btn icon="print" label="Печать" w={24} />
          <Drop label="Варианты печати" />
          <Divider />
          <Btn icon="preview" label="Предварительный просмотр" w={24} />
          <Drop label="Варианты просмотра" w={10} />
          <Divider />
          <Btn icon="cut" label="Вырезать" />
          <Btn icon="copy" label="Копировать" w={24} />
          <Btn icon="paste" label="Вставить" />
          <Divider />
          <Btn icon="brush" label="Копировать свойства" w={22} />
          <Btn icon="props" label="Свойства" />
          <Divider />
          <Btn icon="undo" label="Отменить" w={22} />
          <Btn icon="redo" label="Повторить" />
          <Divider />
          <Btn icon="cabinet" label="Менеджер библиотек" />
          <Btn icon="vars" label="Менеджер документа" w={24} />
          <ToolButton type="button" aria-label="Переменные"><Formula>f(x)</Formula></ToolButton>
          <Divider $w={8} />
          <Btn icon="help" label="Справка" w={24} />
          <BarEnd type="button" aria-label="Другие кнопки"><Overflow /></BarEnd>
        </ToolBar>
        <ToolBar>
          <Grip />
          <Btn icon="zoomPage" label="Показать все" w={22} />
          <Divider />
          <Btn icon="zoomArea" label="Увеличить рамкой" />
          <Divider />
          <Btn icon="zoomIn" label="Масштаб" w={22} />
          <Select label="Текущий масштаб" value="0.6585" w={64} />
          <Divider />
          <Btn icon="crane" label="Перестроить" w={22} />
          <Btn icon="refresh" label="Обновить изображение" w={24} />
          <BarEnd type="button" aria-label="Другие кнопки вида"><Overflow /></BarEnd>
        </ToolBar>
      </ToolRow>

      <ToolRow>
        <ToolBar>
          <Grip />
          <Btn icon="step" label="Шаг курсора" w={22} />
          <Select label="Шаг" value="1.0" w={58} />
          <Divider $w={12} />
          <Btn icon="views" label="Состояния видов" w={22} />
          <Select label="Вид" value="1" w={82} />
          <Divider $w={12} />
          <Btn icon="layers" label="Состояния слоев" w={22} />
          <Select label="Слой" value="0" w={124} />
          <Divider />
          <ToolButton type="button" aria-label="Привязки" $w={34} $on><Icon name="magnet" /><Arrow /></ToolButton>
          <Divider />
          <Btn icon="perp" label="Ограничения" />
          <Divider />
          <Btn icon="grid" label="Сетка" w={22} />
          <Drop label="Варианты сетки" w={12} />
          <Divider $w={8} />
          <Btn icon="axes" label="Локальная система координат" w={22} />
          <Divider />
          <Btn icon="ortho" label="Ортогональное черчение" />
          <Btn icon="snap" label="Округление" w={22} on />
          <Divider $w={8} />
          <Btn icon="xy" label="Координаты" w={22} />
          <CoordInput aria-label="X" defaultValue="161.0046" />
          <CoordInput aria-label="Y" defaultValue="93.9395" />
          <BarEnd type="button" aria-label="Другие кнопки состояния"><Overflow /></BarEnd>
        </ToolBar>
        <ToolBar>
          <Grip />
          <Btn icon="cad" label="Эскиз" w={22} />
          <BarEnd type="button" aria-label="Другие кнопки эскиза"><Overflow /></BarEnd>
        </ToolBar>
      </ToolRow>

      <Workspace>
        <SideColumn>
          <SideBar>
            <SideGrip />
            {panelIcons.map(([icon, label]) => (
              <PanelButton type="button" key={icon} aria-label={label} $on={icon === "symb"}>
                <Icon name={icon} />
              </PanelButton>
            ))}
            <SideRule />
            {commandIcons.map(([icon, label]) => (
              <SideButton type="button" key={icon} aria-label={label}>
                <Icon name={icon} />
              </SideButton>
            ))}
            <SideEnd type="button" aria-label="Другие команды">
              <Svg width="8" height="8" viewBox="0 0 8 8" aria-hidden="true">
                <path d="M1.500 1v6" stroke="#000" />
                <path d="M3 0l4 4-4 4z" fill="#000" stroke="#fff" strokeWidth="0.500" />
              </Svg>
            </SideEnd>
          </SideBar>
        </SideColumn>

        <Mdi>
          <ModelWindow>
            <WindowHead>
              <Hexnut face="#d8d8d8" side="#999" hole="#bbb" />
              <WindowTitle>Вал _ АБВГ.010001-01</WindowTitle>
              <ChildButtons>
                <ChildButton type="button" aria-label="Свернуть модель"><Glyph kind="min" /></ChildButton>
                <ChildButton type="button" aria-label="Развернуть модель"><Glyph kind="max" /></ChildButton>
                <ChildButton type="button" aria-label="Закрыть модель"><Glyph kind="close" /></ChildButton>
              </ChildButtons>
            </WindowHead>
            <ModelBody>
              <TreePanel>
                <TreeHead>
                  <TreeTitle>Дерево модели</TreeTitle>
                  <PlainButton type="button" aria-label="Закрепить">
                    <Svg width="9" height="10" viewBox="0 0 9 10">
                      <path d="M2.500 5.500v-5h4v5M1 5.500h7M4.500 6v4M5.500 1v4" stroke="#000" fill="none" />
                    </Svg>
                  </PlainButton>
                  <PlainButton type="button" aria-label="Закрыть дерево">
                    <Svg width="9" height="9" viewBox="0 0 9 9">
                      <path d="M1 1l7 7M8 1l-7 7" stroke="#000" strokeWidth="1.600" />
                    </Svg>
                  </PlainButton>
                </TreeHead>
                <TreeFrame>
                  <TreeBox>
                    <TreeList>
                      <TreeItem>
                        <Hexnut face="#20d0f8" side="#1838d8" hole="#0a58c8" />
                        <TreeLabel>АБВГ.010001-01 Вал (Тел-1)</TreeLabel>
                      </TreeItem>
                      <TreeItem $nested>
                        <Branch />
                        <Hexnut face="#20d0f8" side="#1838d8" hole="#0a58c8" />
                        <TreeLabel>АБВГ.010001-02 Вал (Тел-</TreeLabel>
                      </TreeItem>
                      <TreeItem>
                        <Hexnut face="#ffc878" side="#e0a040" hole="#d89848" />
                        <TreeLabel $sel>(т) АБВГ.010001-03 Вал (Тел-1</TreeLabel>
                      </TreeItem>
                    </TreeList>
                    <ScrollBar>
                      <ScrollArrow type="button" $dir="left" aria-label="Влево" />
                      <ScrollTrack><ScrollThumb /></ScrollTrack>
                      <ScrollArrow type="button" $dir="right" aria-label="Вправо" />
                    </ScrollBar>
                  </TreeBox>
                </TreeFrame>
                <Tabs>
                  <Tab type="button">Построение</Tab>
                  <Tab type="button" $on>Исполнения</Tab>
                </Tabs>
              </TreePanel>
              <Viewport>
                <Shaft />
                <Triad width="64" height="64" viewBox="0 0 64 64" role="img" aria-label="Оси координат">
                  <path d="M21 36l-2-16" stroke="#10a818" strokeWidth="3" />
                  <path d="M15 25l3-12 5 11z" fill="#10c020" />
                  <path d="M21 36l18 4" stroke="#d01010" strokeWidth="3" />
                  <path d="M37 36l11 6-12 2z" fill="#d01010" />
                  <path d="M21 36l-9 13" stroke="#1880d0" strokeWidth="3" />
                  <path d="M11 43l6 4-9 8z" fill="#1880d0" />
                  <text x="13" y="12" fill="#30e040">Y</text>
                  <text x="51" y="48" fill="#e01818">X</text>
                  <text x="2" y="63" fill="#1890e0">Z</text>
                </Triad>
              </Viewport>
            </ModelBody>
          </ModelWindow>

          <DrawingWindow>
            <WindowHead $active>
              <Svg width="17" height="17" viewBox="0 0 17 17" aria-hidden="true">
                <path d="M3.500 1.500h8l3 3v11h-11z" fill="#fff" stroke="#000" />
                <path d="M5.500 4v5h6v-3h-6M8.500 4v5" stroke={blue} fill="none" />
                <path d="M2.500 11.500h10v4h-10z" fill="#fff" stroke="#000" />
                <path d="M4 13.500h7" stroke="#333" />
              </Svg>
              <WindowTitle>Чертеж БЕЗ ИМЕНИ2 -&gt;Вид 1</WindowTitle>
              <ChildButtons>
                <ChildButton type="button" aria-label="Свернуть чертеж"><Glyph kind="min" /></ChildButton>
                <ChildButton type="button" aria-label="Развернуть чертеж"><Glyph kind="max" /></ChildButton>
                <ChildButton type="button" aria-label="Закрыть чертеж" $close><Glyph kind="close" /></ChildButton>
              </ChildButtons>
            </WindowHead>
            <DrawingBody>
              <DrawingSheet />
            </DrawingBody>
          </DrawingWindow>
        </Mdi>
      </Workspace>

      <PropertyArea aria-label="Панель свойств">
        <PropertyGrip />
        <PropertyBar />
      </PropertyArea>

      <StatusBar>
        <StatusText>
          Щелкните левой кнопкой мыши на объекте для его выделения (вместе с Ctrl или Shift - добавить к выделенным)
        </StatusText>
        <StatusCell />
      </StatusBar>
    </Page>
  );
}
